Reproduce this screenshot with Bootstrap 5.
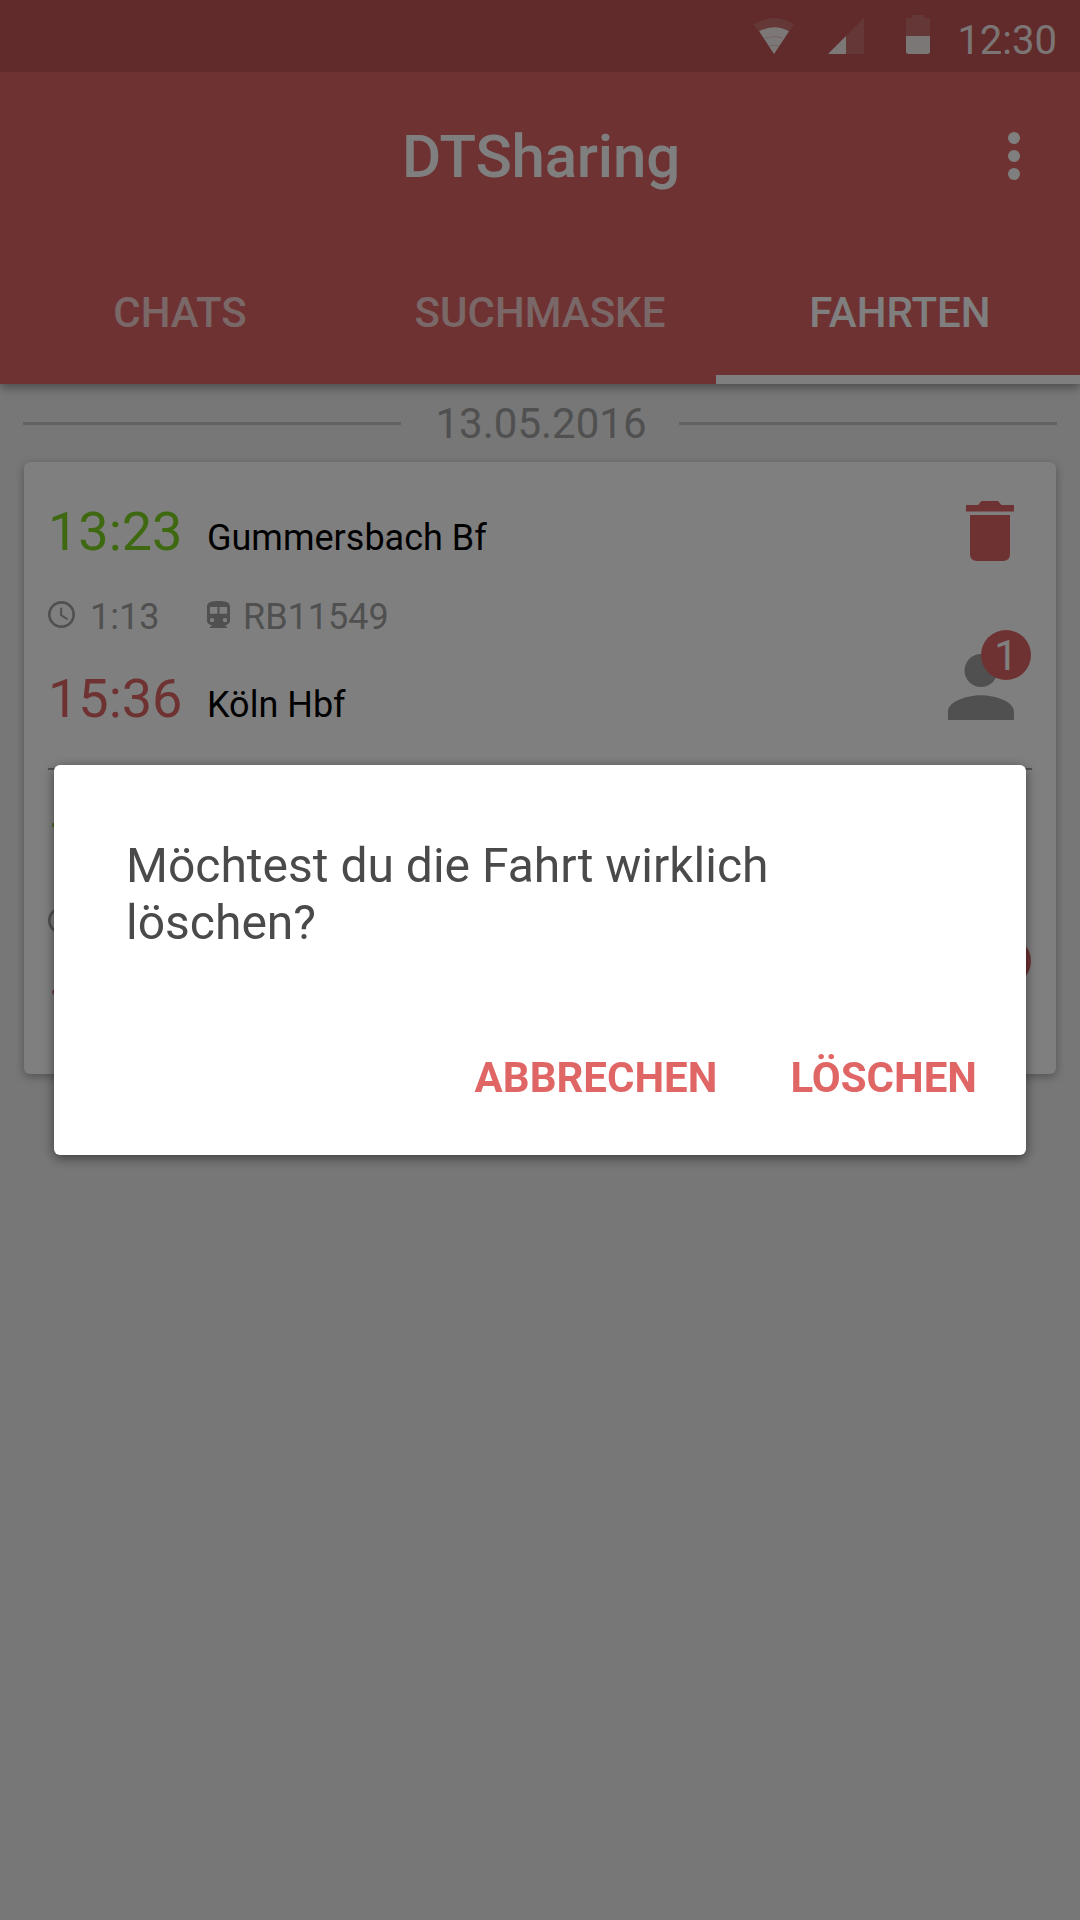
<!DOCTYPE html>
<html lang="de">
<head>
<meta charset="utf-8">
<meta name="viewport" content="width=device-width, initial-scale=1">
<title>DTSharing</title>
<link href="https://cdn.jsdelivr.net/npm/bootstrap@5.3.0/dist/css/bootstrap.min.css" rel="stylesheet">
<style>
  :root { --brand: #de6464; --muted: #a0a0a0; }
  html, body { height: 100%; overflow: hidden; }
  body { font-family: Roboto, "Liberation Sans", sans-serif; background: #eee; color: #000; line-height: 1; }
  svg { display: block; flex: none; }
  .app-head { background: var(--brand); height: 384px; box-shadow: 0 3px 10px rgba(0,0,0,.4); z-index: 1; }
  .status-bar { height: 72px; background: rgba(0,0,0,.125); padding-right: 23px; font-size: 40px; color: rgba(255,255,255,.9); }
  .status-bar span { padding-top: 9px; }
  .status-icons { width: 176px; height: 72px; margin-right: 27px; }
  .toolbar { height: 168px; padding: 2px 0 0 2px; font-size: 60px; font-weight: 500; letter-spacing: -.2px; color: #fff; }
  .toolbar .overflow-btn { right: 60px; top: 60px; }
  .tab-row { height: 144px; font-size: 42px; font-weight: 500; }
  .tab-row .nav-link { padding: 2px 0 0; color: rgba(255,255,255,.7); display: flex; align-items: center; justify-content: center; }
  .tab-row .nav-link.active { color: #fff; }
  .tab-line { width: 364.500px; height: 9px; background: #fff; }
  .date-row { height: 78px; padding: 0 22.500px; font-size: 42px; color: var(--muted); }
  .date-row span { padding: 2px 0 0 2px; }
  .rule { width: 378px; height: 3px; background: #c4c4c4; }
  .trips { margin: 0 24px; border: 0; border-radius: 6px; box-shadow: 0 3px 10px rgba(0,0,0,.3); }
  .trip { height: 306px; padding: 43px 42px 0 24px; }
  .trip + .trip::before { content: ""; position: absolute; top: 0; left: 24px; right: 24px; height: 2px; background: #a0a0a0; }
  .stop { height: 54px; font-size: 36px; }
  .stop-time { width: 159px; font-size: 54px; }
  .dep { color: #7ed321; }
  .arr { color: var(--brand); }
  .meta { height: 36px; margin: 40px 0 37px; font-size: 36px; color: var(--muted); }
  .meta svg { margin-bottom: 5px; }
  .meta-time { width: 159px; gap: 15px; }
  .meta-line { gap: 13px; }
  .actions .bin { margin-top: -4px; }
  .people { margin-top: 93px; }
  .count { width: 50px; height: 50px; right: -17px; top: -24px; padding-top: 2px; background: var(--brand); color: #fff; font-size: 42px; }
  .scrim { background: rgba(0,0,0,.5); z-index: 10; }
  .ask { width: 972px; height: 390px; border: 0; border-radius: 6px; padding: 72px 49px 0 72px; background: #fff; box-shadow: 0 3px 12px rgba(0,0,0,.5); font-size: 48px; line-height: 57px; color: #4a4a4a; }
  .ask-actions { margin-top: 100px; gap: 73px; }
  .ask .btn { padding: 0; border: 0; font-size: 42px; line-height: 54px; font-weight: 700; color: #e06666; }
</style>
</head>
<body>
<header class="app-head position-relative">
  <div class="status-bar d-flex align-items-center justify-content-end">
    <svg class="status-icons" viewBox="754 0 176 72" fill="#fff">
      <path d="M754 24.500Q774 11.500 794 24.500L774 54Z" opacity=".15"/>
      <path d="M759.200 31.300Q774 23 789 31.300L774 54Z" opacity=".9"/>
      <path d="M765 38q9-3 18 0M769 46q5-2 10 0" fill="none" stroke="#c05656" stroke-width=".7" opacity=".4"/>
      <path d="M828 54L864 18V54Z" opacity=".15"/>
      <path d="M828 54L846 36V54Z" opacity=".9"/>
      <path d="M906 36V20.500Q906 18 908.500 18H912V15H924V18H927.500Q930 18 930 20.500V36Z" opacity=".15"/>
      <path d="M906 36H930V51.500Q930 54 927.500 54H908.500Q906 54 906 51.500Z" opacity=".9"/>
    </svg>
    <span>12:30</span>
  </div>
  <div class="toolbar position-relative d-flex align-items-center justify-content-center">
    <span>DTSharing</span>
    <svg class="overflow-btn position-absolute" width="12" height="48" fill="#fff"><circle cx="6" cy="6" r="6"/><circle cx="6" cy="24" r="6"/><circle cx="6" cy="42" r="6"/></svg>
  </div>
  <nav class="tab-row nav nav-fill row g-0">
    <a class="nav-link col-4">CHATS</a>
    <a class="nav-link col-4">SUCHMASKE</a>
    <a class="nav-link col-4 active">FAHRTEN</a>
  </nav>
  <div class="tab-line position-absolute bottom-0 end-0"></div>
</header>

<main>
  <div class="date-row d-flex align-items-center justify-content-between">
    <div class="rule"></div><span>13.05.2016</span><div class="rule"></div>
  </div>
  <section class="trips card">
    <article class="trip position-relative d-flex justify-content-between">
      <div>
        <div class="stop d-flex align-items-baseline"><span class="stop-time dep">13:23</span><span>Gummersbach Bf</span></div>
        <div class="meta d-flex align-items-center">
          <span class="meta-time d-flex align-items-center">
            <svg width="27" height="27" viewBox="2 2 20 20" fill="currentColor"><path d="M12 2a10 10 0 1 0 0 20 10 10 0 0 0 0-20zm0 18a8 8 0 1 1 0-16 8 8 0 0 1 0 16zM12.500 7H11v6l5.250 3.150.75-1.230-4.500-2.670z"/></svg>
            <span>1:13</span>
          </span>
          <span class="meta-line d-flex align-items-center">
            <svg width="23" height="27" viewBox="4 2 16 19" preserveAspectRatio="none" fill="currentColor"><path d="M12 2c-4.420 0-8 .5-8 4v9.500C4 17.430 5.570 19 7.500 19L6 20.500v.5h12v-.5L16.500 19c1.930 0 3.500-1.570 3.500-3.500V6c0-3.500-3.580-4-8-4zM7.500 17a1.500 1.500 0 1 1 0-3 1.500 1.500 0 0 1 0 3zm3.800-6H6V6.300h5.300zm1.400 0V6.300H18V11zm3.800 6a1.500 1.500 0 1 1 0-3 1.500 1.500 0 0 1 0 3z"/></svg>
            <span>RB11549</span>
          </span>
        </div>
        <div class="stop d-flex align-items-baseline"><span class="stop-time arr">15:36</span><span>Köln Hbf</span></div>
      </div>
      <div class="actions d-flex flex-column align-items-end">
        <svg class="bin" width="48" height="60" fill="#de6464"><path d="M0 4H12L15.500 0H32L35.500 4H48V10.500H0ZM4 14H44V53Q44 60 37 60H11Q4 60 4 53Z"/></svg>
        <div class="people position-relative">
          <svg width="66" height="66" viewBox="4 4 16 16" fill="#a0a0a0"><path d="M12 12a4 4 0 1 0 0-8 4 4 0 0 0 0 8zm0 2c-3.500 0-8 1.500-8 4v2h16v-2c0-2.500-4.500-4-8-4z"/></svg>
          <span class="count rounded-circle position-absolute d-flex align-items-center justify-content-center">1</span>
        </div>
      </div>
    </article>
    <article class="trip position-relative d-flex justify-content-between">
      <div>
        <div class="stop d-flex align-items-baseline"><span class="stop-time dep">1</span></div>
        <div class="meta d-flex align-items-center">
          <svg width="27" height="27" viewBox="2 2 20 20" fill="currentColor"><path d="M12 2a10 10 0 1 0 0 20 10 10 0 0 0 0-20zm0 18a8 8 0 1 1 0-16 8 8 0 0 1 0 16z"/></svg>
        </div>
        <div class="stop d-flex align-items-baseline"><span class="stop-time arr">1</span></div>
      </div>
      <div class="actions d-flex flex-column align-items-end">
        <svg class="bin" width="48" height="60"></svg>
        <div class="people position-relative">
          <svg width="66" height="66"></svg>
          <span class="count rounded-circle position-absolute"></span>
        </div>
      </div>
    </article>
  </section>
</main>

<div class="scrim position-fixed top-0 start-0 vw-100 vh-100 d-flex align-items-center justify-content-center">
  <div class="ask modal-content" role="dialog">
    <p class="m-0">Möchtest du die Fahrt wirklich<br>löschen?</p>
    <div class="ask-actions d-flex justify-content-end">
      <button class="btn">ABBRECHEN</button>
      <button class="btn">LÖSCHEN</button>
    </div>
  </div>
</div>
<script src="https://cdn.jsdelivr.net/npm/bootstrap@5.3.0/dist/js/bootstrap.bundle.min.js"></script>
</body>
</html>
